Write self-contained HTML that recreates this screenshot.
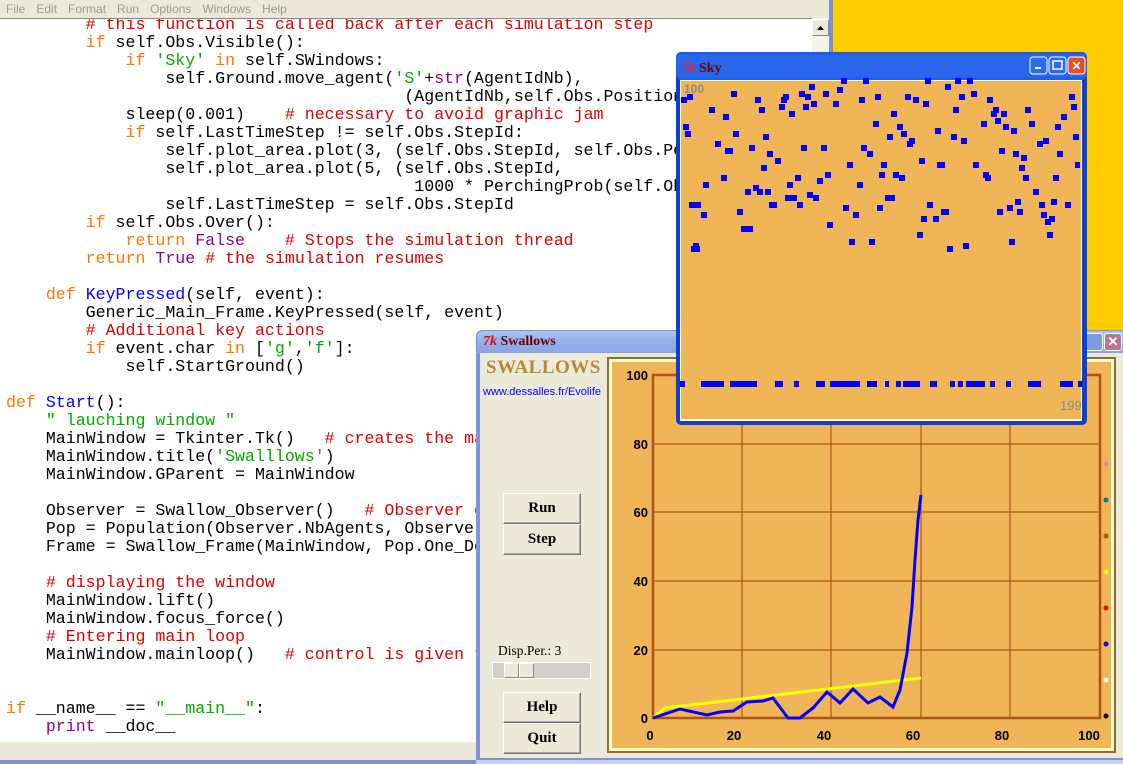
<!DOCTYPE html>
<html><head><meta charset="utf-8"><style>
*{margin:0;padding:0;box-sizing:border-box}
body{width:1123px;height:764px;overflow:hidden;background:#FFCC00;position:relative;font-family:"Liberation Sans",sans-serif}
.abs{position:absolute}
#menu{left:0;top:0;width:829px;height:18px;background:#ECE9D8;font-size:12px;color:#9a9a9a;padding:2px 0 0 6px;word-spacing:0}
#menu span{margin-right:11px}
#ed{left:0;top:18px;width:812px;height:724px;background:#fff;overflow:hidden;border-top:1px solid #888}
#code{position:absolute;left:6px;top:-3px;font-family:"Liberation Mono",monospace;font-size:16.6px;line-height:18px;white-space:pre;color:#000}
.k{color:#FF7700}.s{color:#00AA00}.c{color:#DD0000}.b{color:#900090}.d{color:#0000FF}
#sb{left:812px;top:18px;width:17px;height:746px;background:#F4F2EA}
#sbb{left:812px;top:19px;width:17px;height:17px;background:#ECE9D8;border:1px solid #fff;border-right-color:#888;border-bottom-color:#888}
#edbot{left:0;top:742px;width:829px;height:18px;background:#ECE9D8}
#edbot2{left:0;top:760px;width:829px;height:4px;background:#7B8ED8}
#edr{left:829px;top:0;width:4px;height:764px;background:#7B8ED8}
.btn{position:absolute;left:503px;width:78px;height:31px;background:#ECE9D8;border:1px solid #fff;border-right-color:#777;border-bottom-color:#777;box-shadow:inset -1px -1px 0 #aaa;font-family:"Liberation Serif",serif;font-weight:bold;font-size:15px;text-align:center;line-height:29px}
</style></head><body>
<div id="menu" class="abs"><span>File</span><span>Edit</span><span>Format</span><span>Run</span><span>Options</span><span>Windows</span><span>Help</span></div>
<div id="ed" class="abs"><div id="code">        <span class="c"># this function is called back after each simulation step</span>
        <span class="k">if</span> self.Obs.Visible():
            <span class="k">if</span> <span class="s">'Sky'</span> <span class="k">in</span> self.SWindows:
                self.Ground.move_agent(<span class="s">'S'</span>+<span class="b">str</span>(AgentIdNb),
                                        (AgentIdNb,self.Obs.Position(AgentIdNb)))
            sleep(0.001)    <span class="c"># necessary to avoid graphic jam</span>
            <span class="k">if</span> self.LastTimeStep != self.Obs.StepId:
                self.plot_area.plot(3, (self.Obs.StepId, self.Obs.Perching()))
                self.plot_area.plot(5, (self.Obs.StepId,
                                         1000 * PerchingProb(self.Obs.StepId)))
                self.LastTimeStep = self.Obs.StepId
        <span class="k">if</span> self.Obs.Over():
            <span class="k">return</span> <span class="b">False</span>    <span class="c"># Stops the simulation thread</span>
        <span class="k">return</span> <span class="b">True</span> <span class="c"># the simulation resumes</span>

    <span class="k">def</span> <span class="d">KeyPressed</span>(self, event):
        Generic_Main_Frame.KeyPressed(self, event)
        <span class="c"># Additional key actions</span>
        <span class="k">if</span> event.char <span class="k">in</span> [<span class="s">'g'</span>,<span class="s">'f'</span>]:
            self.StartGround()

<span class="k">def</span> <span class="d">Start</span>():
    <span class="s">" lauching window "</span>
    MainWindow = Tkinter.Tk()   <span class="c"># creates the main window</span>
    MainWindow.title(<span class="s">'Swalllows'</span>)
    MainWindow.GParent = MainWindow

    Observer = Swallow_Observer()   <span class="c"># Observer contains statistics</span>
    Pop = Population(Observer.NbAgents, Observer)
    Frame = Swallow_Frame(MainWindow, Pop.One_Decision)

    <span class="c"># displaying the window</span>
    MainWindow.lift()
    MainWindow.focus_force()
    <span class="c"># Entering main loop</span>
    MainWindow.mainloop()   <span class="c"># control is given to the window</span>


<span class="k">if</span> __name__ == <span class="s">"__main__"</span>:
    <span class="b">print</span> __doc__</div></div>
<div id="sb" class="abs"></div>
<div id="sbb" class="abs"><svg width="15" height="15"><path d="M4 10 L7.5 6 L11 10Z" fill="#000"/></svg></div>
<div id="edbot" class="abs"></div>
<div id="edbot2" class="abs"></div>
<div id="edr" class="abs"></div>

<!-- Swallows window -->
<div class="abs" style="left:476px;top:330px;width:647px;height:434px;background:#7D93E0;border-radius:6px 0 0 0"></div>
<div class="abs" style="left:477px;top:331px;width:646px;height:22px;background:linear-gradient(#B1C6F2,#97B1EB 40%,#8BA6E6);border-radius:6px 0 0 0"></div>
<div class="abs" style="left:483px;top:334px;font-family:'Liberation Serif',serif;font-weight:bold;font-size:14px;color:#6A0000"><span style="color:#E00;font-style:italic">7k</span> Swallows</div>
<div class="abs" style="left:1085px;top:333px;width:18px;height:18px;border:1px solid #fff;border-radius:3px;background:#7E9BE0"></div>
<div class="abs" style="left:1104px;top:333px;width:18px;height:18px;border:1px solid #fff;border-radius:3px;background:#B47A90;color:#fff;font-size:13px;font-weight:bold;text-align:center;line-height:16px">✕</div>
<div class="abs" style="left:480px;top:353px;width:643px;height:405px;background:#ECE9D8"></div>
<div class="abs" style="left:476px;top:758px;width:647px;height:6px;background:#C5D0F0;border-top:2px solid #7D93E0"></div>
<div class="abs" style="left:486px;top:357px;font-family:'Liberation Serif',serif;font-weight:bold;font-size:19px;color:#B5893A;letter-spacing:0.5px">SWALLOWS</div>
<div class="abs" style="left:483px;top:386px;font-size:11px;color:#0000FF">www.dessalles.fr/Evolife</div>
<div class="btn" style="top:493px">Run</div>
<div class="btn" style="top:524px">Step</div>
<div class="abs" style="left:498px;top:643px;font-family:'Liberation Serif',serif;font-size:13.5px">Disp.Per.: 3</div>
<div class="abs" style="left:492px;top:662px;width:99px;height:17px;background:#D4D0C8;border:1px solid #fff"></div>
<div class="abs" style="left:504px;top:663px;width:15px;height:15px;background:#ECE9D8;border:1px solid #fff;border-right-color:#888;border-bottom-color:#888"></div>
<div class="abs" style="left:519px;top:663px;width:15px;height:15px;background:#ECE9D8;border:1px solid #fff;border-right-color:#888;border-bottom-color:#888"></div>
<div class="btn" style="top:692px">Help</div>
<div class="btn" style="top:723px">Quit</div>

<svg class="abs" style="left:0;top:0" width="1123" height="764">
<rect x="607" y="357" width="509" height="396" fill="#8E6B35"/>
<rect x="609" y="359" width="505" height="392" fill="#FFFFC8"/>
<rect x="612" y="362" width="499" height="386" fill="#EFB556"/>
<g stroke="#B0541A" stroke-width="1.2">
<line x1="653" y1="444" x2="1100" y2="444"/><line x1="653" y1="512" x2="1100" y2="512"/><line x1="653" y1="581" x2="1100" y2="581"/><line x1="653" y1="650" x2="1100" y2="650"/>
<line x1="742" y1="375" x2="742" y2="718"/><line x1="831" y1="375" x2="831" y2="718"/><line x1="921" y1="375" x2="921" y2="718"/><line x1="1010" y1="375" x2="1010" y2="718"/>
</g>
<rect x="653" y="375" width="447" height="343" fill="none" stroke="#B0541A" stroke-width="2.5"/>
<polyline fill="none" stroke="#FFFF00" stroke-width="3" points="653,718 665,708 921,678"/>
<polyline fill="none" stroke="#0000FF" stroke-width="3" points="653,718 680,709 707,715 720,712 733,711 747,702 763,701 773,698 788,718 800,718 813,708 827,692 840,703 853,689 868,703 880,697 893,707 900,690 907,653 912,607 915,560 918,520 921,495"/>
<g font-family="Liberation Sans" font-weight="bold" font-size="13" text-anchor="end">
<text x="648" y="380">100</text><text x="648" y="449">80</text><text x="648" y="517">60</text><text x="648" y="586">40</text><text x="648" y="655">20</text><text x="648" y="723">0</text>
</g>
<g font-family="Liberation Sans" font-weight="bold" font-size="13" text-anchor="middle">
<text x="650" y="740">0</text><text x="734" y="740">20</text><text x="824" y="740">40</text><text x="913" y="740">60</text><text x="1002" y="740">80</text><text x="1089" y="740">100</text>
</g>
<circle cx="1106" cy="464" r="2.5" fill="#F080A0"/><circle cx="1106" cy="500" r="2.5" fill="#008080"/><circle cx="1106" cy="536" r="2.5" fill="#A05A00"/><circle cx="1106" cy="572" r="2.5" fill="#FFFF00"/><circle cx="1106" cy="608" r="2.5" fill="#FF0000"/><circle cx="1106" cy="644" r="2.5" fill="#0000FF"/><circle cx="1106" cy="680" r="2.5" fill="#FFFFFF"/><circle cx="1106" cy="716" r="2.5" fill="#000"/>

<!-- Sky window -->
<rect x="676" y="52" width="411" height="373" rx="5" fill="#0A3FD8"/>
<rect x="676" y="52" width="411" height="28" rx="5" fill="#1E5EE8"/>
<rect x="677" y="55" width="409" height="22" fill="#2866EC"/>
<rect x="680" y="80" width="402" height="341" fill="#FFFFC8"/>
<rect x="681" y="81" width="400" height="338" fill="#EFB556"/>
<text x="682" y="72" font-family="Liberation Serif" font-style="italic" font-weight="bold" font-size="14" fill="#FF2020">7k</text>
<text x="699" y="72" font-family="Liberation Serif" font-weight="bold" font-size="14" fill="#700000">Sky</text>
<rect x="1030" y="57" width="17" height="17" rx="3" fill="#2A6CF0" stroke="#fff"/><rect x="1035" y="67" width="6" height="2" fill="#fff"/>
<rect x="1049" y="57" width="17" height="17" rx="3" fill="#2A6CF0" stroke="#fff"/><rect x="1053" y="61" width="9" height="8" fill="none" stroke="#fff" stroke-width="1.5"/>
<rect x="1068" y="57" width="17" height="17" rx="3" fill="#E0502A" stroke="#fff"/><text x="1076.5" y="70" font-family="Liberation Sans" font-weight="bold" font-size="12" fill="#fff" text-anchor="middle">✕</text>
<text x="684" y="93" font-family="Liberation Sans" font-weight="bold" font-size="12" fill="#8A8A8A">100</text>
<text x="1060" y="410" font-family="Liberation Sans" font-size="13" fill="#8A8A8A">199</text>
<g fill="#0000FF" transform="translate(-3,-3)">
<rect x="684" y="100" width="6" height="6"/><rect x="690" y="97" width="6" height="6"/><rect x="734" y="94" width="6" height="6"/><rect x="812" y="87" width="6" height="6"/><rect x="844" y="81" width="6" height="6"/><rect x="866" y="81" width="6" height="6"/><rect x="928" y="81" width="6" height="6"/><rect x="958" y="81" width="6" height="6"/><rect x="970" y="81" width="6" height="6"/><rect x="948" y="87" width="6" height="6"/><rect x="840" y="90" width="6" height="6"/><rect x="802" y="94" width="6" height="6"/><rect x="826" y="94" width="6" height="6"/><rect x="786" y="97" width="6" height="6"/><rect x="808" y="97" width="6" height="6"/><rect x="878" y="97" width="6" height="6"/><rect x="908" y="97" width="6" height="6"/><rect x="962" y="97" width="6" height="6"/><rect x="974" y="94" width="6" height="6"/><rect x="1072" y="97" width="6" height="6"/><rect x="758" y="100" width="6" height="6"/><rect x="784" y="100" width="6" height="6"/><rect x="862" y="100" width="6" height="6"/><rect x="916" y="100" width="6" height="6"/><rect x="990" y="100" width="6" height="6"/><rect x="814" y="104" width="6" height="6"/><rect x="836" y="104" width="6" height="6"/><rect x="926" y="104" width="6" height="6"/><rect x="1074" y="107" width="6" height="6"/><rect x="782" y="107" width="6" height="6"/><rect x="806" y="107" width="6" height="6"/><rect x="712" y="110" width="6" height="6"/><rect x="762" y="110" width="6" height="6"/><rect x="956" y="110" width="6" height="6"/><rect x="996" y="110" width="6" height="6"/><rect x="1028" y="110" width="6" height="6"/><rect x="792" y="114" width="6" height="6"/><rect x="894" y="114" width="6" height="6"/><rect x="994" y="114" width="6" height="6"/><rect x="1004" y="114" width="6" height="6"/><rect x="726" y="117" width="6" height="6"/><rect x="1064" y="117" width="6" height="6"/><rect x="998" y="121" width="6" height="6"/><rect x="876" y="124" width="6" height="6"/><rect x="984" y="124" width="6" height="6"/><rect x="1032" y="124" width="6" height="6"/><rect x="686" y="127" width="6" height="6"/><rect x="900" y="127" width="6" height="6"/><rect x="1006" y="127" width="6" height="6"/><rect x="1058" y="127" width="6" height="6"/><rect x="938" y="131" width="6" height="6"/><rect x="1014" y="131" width="6" height="6"/><rect x="688" y="134" width="6" height="6"/><rect x="736" y="134" width="6" height="6"/><rect x="904" y="134" width="6" height="6"/><rect x="766" y="137" width="6" height="6"/><rect x="890" y="137" width="6" height="6"/><rect x="954" y="137" width="6" height="6"/><rect x="1076" y="137" width="6" height="6"/><rect x="912" y="141" width="6" height="6"/><rect x="964" y="141" width="6" height="6"/><rect x="1046" y="141" width="6" height="6"/><rect x="718" y="144" width="6" height="6"/><rect x="910" y="144" width="6" height="6"/><rect x="1040" y="144" width="6" height="6"/><rect x="752" y="148" width="6" height="6"/><rect x="804" y="148" width="6" height="6"/><rect x="824" y="148" width="6" height="6"/><rect x="864" y="148" width="6" height="6"/><rect x="728" y="151" width="8" height="6"/><rect x="1002" y="151" width="6" height="6"/><rect x="770" y="154" width="6" height="6"/><rect x="870" y="154" width="6" height="6"/><rect x="1016" y="154" width="6" height="6"/><rect x="1060" y="154" width="6" height="6"/><rect x="1024" y="158" width="6" height="6"/><rect x="778" y="161" width="6" height="6"/><rect x="922" y="161" width="6" height="6"/><rect x="850" y="165" width="6" height="6"/><rect x="884" y="165" width="6" height="6"/><rect x="940" y="165" width="8" height="6"/><rect x="976" y="165" width="6" height="6"/><rect x="1078" y="165" width="5" height="6"/><rect x="764" y="168" width="6" height="6"/><rect x="1022" y="168" width="6" height="6"/><rect x="828" y="175" width="6" height="6"/><rect x="882" y="175" width="6" height="6"/><rect x="896" y="175" width="6" height="6"/><rect x="986" y="175" width="6" height="6"/><rect x="724" y="178" width="6" height="6"/><rect x="798" y="178" width="6" height="6"/><rect x="902" y="178" width="6" height="6"/><rect x="988" y="178" width="6" height="6"/><rect x="1026" y="178" width="6" height="6"/><rect x="1056" y="178" width="6" height="6"/><rect x="820" y="181" width="6" height="6"/><rect x="706" y="185" width="6" height="6"/><rect x="790" y="185" width="6" height="6"/><rect x="860" y="185" width="6" height="6"/><rect x="756" y="188" width="6" height="6"/><rect x="748" y="192" width="6" height="6"/><rect x="760" y="192" width="6" height="6"/><rect x="768" y="192" width="6" height="6"/><rect x="1036" y="192" width="6" height="6"/><rect x="810" y="195" width="6" height="6"/><rect x="788" y="198" width="6" height="6"/><rect x="794" y="198" width="6" height="6"/><rect x="816" y="198" width="6" height="6"/><rect x="888" y="198" width="10" height="6"/><rect x="1018" y="202" width="6" height="6"/><rect x="1054" y="202" width="6" height="6"/><rect x="692" y="205" width="6" height="6"/><rect x="698" y="205" width="6" height="6"/><rect x="772" y="205" width="8" height="6"/><rect x="800" y="205" width="6" height="6"/><rect x="930" y="205" width="6" height="6"/><rect x="1042" y="205" width="6" height="6"/><rect x="1068" y="205" width="6" height="6"/><rect x="846" y="208" width="6" height="6"/><rect x="880" y="208" width="6" height="6"/><rect x="1010" y="208" width="6" height="6"/><rect x="740" y="212" width="6" height="6"/><rect x="944" y="212" width="8" height="6"/><rect x="1000" y="212" width="6" height="6"/><rect x="1020" y="212" width="6" height="6"/><rect x="704" y="215" width="6" height="6"/><rect x="856" y="215" width="6" height="6"/><rect x="1044" y="215" width="6" height="6"/><rect x="924" y="219" width="6" height="6"/><rect x="936" y="219" width="6" height="6"/><rect x="1052" y="219" width="6" height="6"/><rect x="1048" y="222" width="6" height="6"/><rect x="830" y="225" width="6" height="6"/><rect x="744" y="229" width="6" height="6"/><rect x="750" y="229" width="6" height="6"/><rect x="920" y="235" width="6" height="6"/><rect x="1050" y="235" width="6" height="6"/><rect x="852" y="242" width="6" height="6"/><rect x="872" y="242" width="6" height="6"/><rect x="1012" y="242" width="6" height="6"/><rect x="966" y="246" width="6" height="6"/><rect x="950" y="249" width="6" height="6"/><rect x="696" y="246" width="6" height="6"/><rect x="694" y="249" width="9" height="6"/>
</g>
<g fill="#0000FF">
<rect x="680" y="381" width="5" height="6"/><rect x="701" y="381" width="23" height="6"/><rect x="730" y="381" width="27" height="6"/><rect x="775" y="381" width="8" height="6"/><rect x="794" y="381" width="5" height="6"/><rect x="816" y="381" width="9" height="6"/><rect x="830" y="381" width="30" height="6"/><rect x="867" y="381" width="10" height="6"/><rect x="885" y="381" width="4" height="6"/><rect x="896" y="381" width="5" height="6"/><rect x="903" y="381" width="17" height="6"/><rect x="930" y="381" width="7" height="6"/><rect x="950" y="381" width="5" height="6"/><rect x="958" y="381" width="5" height="6"/><rect x="966" y="381" width="19" height="6"/><rect x="990" y="381" width="5" height="6"/><rect x="1006" y="381" width="5" height="6"/><rect x="1028" y="381" width="13" height="6"/><rect x="1060" y="381" width="13" height="6"/><rect x="1078" y="381" width="4" height="6"/>
</g>
</svg>
</body></html>
